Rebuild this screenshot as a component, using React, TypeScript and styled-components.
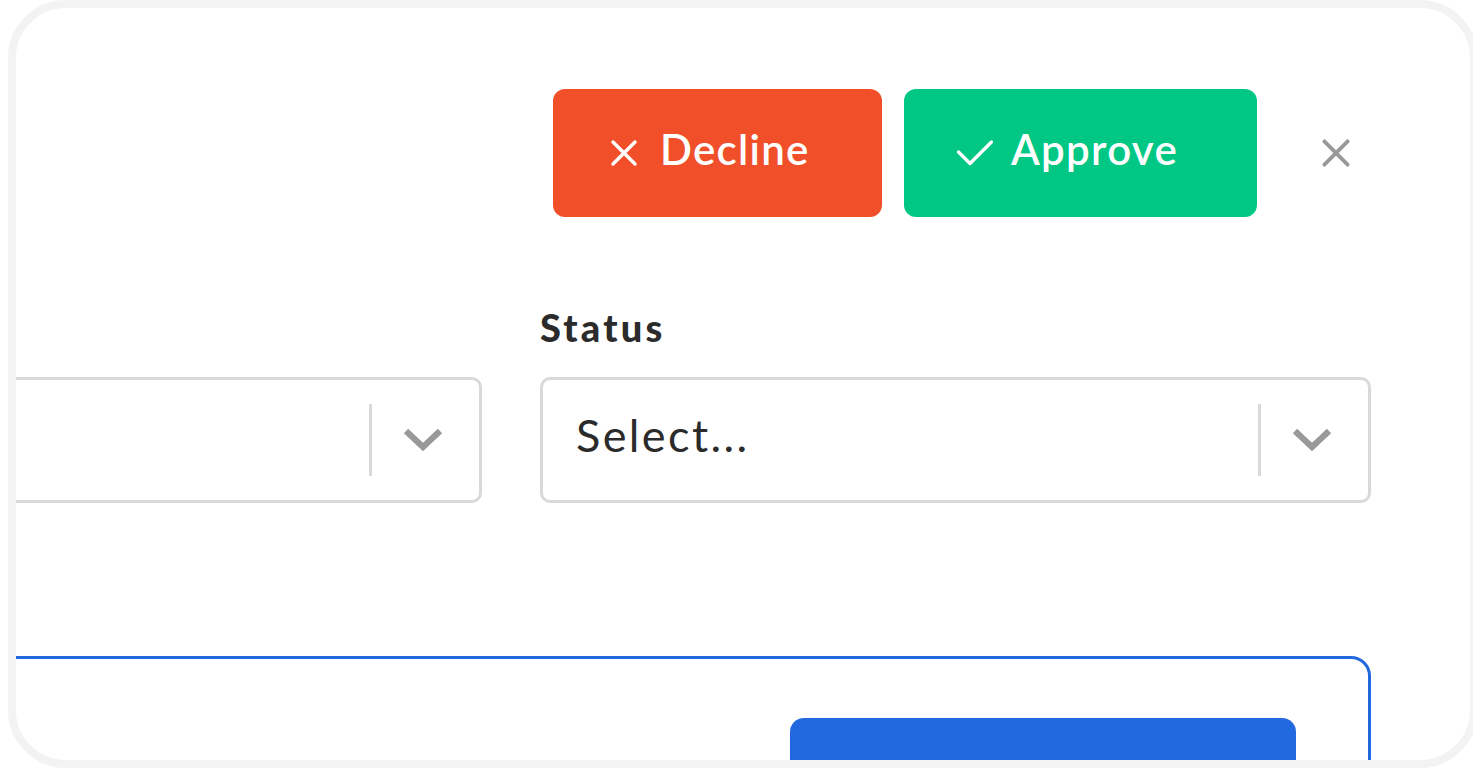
import React from "react";
import styled, { createGlobalStyle } from "styled-components";

const colors = {
  frame: "#f3f3f3",
  text: "#2b2b2b",
  red: "#f04f29",
  green: "#00c884",
  blue: "#2268de",
  border: "#d9d9d9",
  muted: "#999999",
};

const GlobalStyle = createGlobalStyle`
  html, body {
    margin: 0;
    padding: 0;
    overflow: hidden;
    background: #fff;
  }
  body {
    font-family: Lato, "Noto Sans", sans-serif;
    color: ${colors.text};
  }
  * {
    box-sizing: border-box;
  }
`;

const CrossIcon = ({ size = 36, stroke = 3.4 }: { size?: number; stroke?: number }) => (
  <svg width={size} height={size} viewBox="0 0 36 36" fill="none">
    <path d="M7 7L29 29M29 7L7 29" stroke="currentColor" strokeWidth={stroke} strokeLinecap="round" />
  </svg>
);

const CheckIcon = () => (
  <svg width={36} height={36} viewBox="0 0 36 36" fill="none">
    <path
      d="M1.5 17L13 28.5L34.5 7"
      stroke="currentColor"
      strokeWidth={3.4}
      strokeLinecap="round"
      strokeLinejoin="round"
    />
  </svg>
);

const ChevronIcon = () => (
  <svg width={40} height={24} viewBox="0 0 40 24" fill="none">
    <path d="M3 4L20 20L37 4" stroke="currentColor" strokeWidth={6.2} />
  </svg>
);

interface SelectProps {
  placeholder?: string;
}

const Select = ({ placeholder }: SelectProps) => (
  <SelectBox>
    <SelectValue>{placeholder}</SelectValue>
    <Indicators>
      <Separator />
      <Chevron>
        <ChevronIcon />
      </Chevron>
    </Indicators>
  </SelectBox>
);

export default function App() {
  return (
    <>
      <GlobalStyle />
      <Frame>
        <Content>
          <Header>
            <ActionButton tone="red" width={329}>
              <IconSlot>
                <CrossIcon />
              </IconSlot>
              Decline
            </ActionButton>
            <ActionButton tone="green" width={353}>
              <IconSlot>
                <CheckIcon />
              </IconSlot>
              Approve
            </ActionButton>
            <CloseButton aria-label="Close">
              <CrossIcon size={38} stroke={3.6} />
            </CloseButton>
          </Header>
          <Fields>
            <Field>
              <Select />
            </Field>
            <Field>
              <Label>Status</Label>
              <Select placeholder="Select..." />
            </Field>
          </Fields>
          <Panel>
            <PanelFooter>
              <PrimaryButton />
            </PanelFooter>
          </Panel>
        </Content>
      </Frame>
    </>
  );
}

const Frame = styled.div`
  margin-left: 8px;
  width: 1470px;
  height: 768px;
  border: 8px solid ${colors.frame};
  border-radius: 58px;
  background: #fff;
  overflow: hidden;
`;

/* the form is scrolled sideways, so its left column sits partly out of view */
const Content = styled.div`
  margin-left: -365px;
  width: 1720px;
  display: flex;
  flex-direction: column;
`;

const Header = styled.div`
  display: flex;
  justify-content: flex-end;
  align-items: center;
  gap: 22px;
  padding: 81px 11px 0 0;
`;

const ActionButton = styled.button<{ tone: "red" | "green"; width: number }>`
  display: flex;
  align-items: center;
  gap: 18px;
  width: ${(p) => p.width}px;
  height: 128px;
  padding: 0 0 8px 53px;
  border: none;
  border-radius: 12px;
  background: ${(p) => (p.tone === "red" ? colors.red : colors.green)};
  color: #fff;
  font-family: Lato, sans-serif;
  font-size: 42px;
  font-weight: 600;
  letter-spacing: 1.3px;
  cursor: pointer;
`;

const IconSlot = styled.span`
  display: flex;
  width: 36px;
  height: 36px;
  margin-top: 8px;
`;

const CloseButton = styled.button`
  display: flex;
  align-items: center;
  justify-content: center;
  width: 48px;
  height: 48px;
  margin-left: 33px;
  padding: 0;
  border: none;
  background: none;
  color: ${colors.muted};
  cursor: pointer;
`;

const Fields = styled.div`
  display: grid;
  grid-template-columns: 831px 831px;
  column-gap: 58px;
  align-items: end;
  margin-top: 88px;
`;

const Field = styled.div`
  display: flex;
  flex-direction: column;
`;

const Label = styled.label`
  font-size: 38px;
  font-weight: 900;
  line-height: 1.2;
  letter-spacing: 3.2px;
  margin-bottom: 26px;
`;

const SelectBox = styled.div`
  display: flex;
  align-items: center;
  height: 126px;
  border: 3px solid ${colors.border};
  border-radius: 10px;
  background: #fff;
`;

const SelectValue = styled.div`
  flex: 1;
  padding: 0 0 10px 33px;
  font-size: 45px;
  font-weight: 400;
  letter-spacing: 2.4px;
  color: ${colors.text};
`;

const Indicators = styled.div`
  display: flex;
  align-items: center;
  align-self: stretch;
`;

const Separator = styled.span`
  align-self: center;
  width: 3px;
  height: 72px;
  background: ${colors.border};
`;

const Chevron = styled.span`
  display: flex;
  padding: 0 36px 2px 31px;
  color: ${colors.muted};
`;

const Panel = styled.div`
  margin-top: 153px;
  height: 200px;
  border: 3px solid ${colors.blue};
  border-radius: 0 20px 0 0;
`;

const PanelFooter = styled.div`
  display: flex;
  justify-content: flex-end;
  padding: 59px 72px 0 0;
`;

const PrimaryButton = styled.button`
  width: 506px;
  height: 100px;
  border: none;
  border-radius: 14px;
  background: ${colors.blue};
  cursor: pointer;
`;
